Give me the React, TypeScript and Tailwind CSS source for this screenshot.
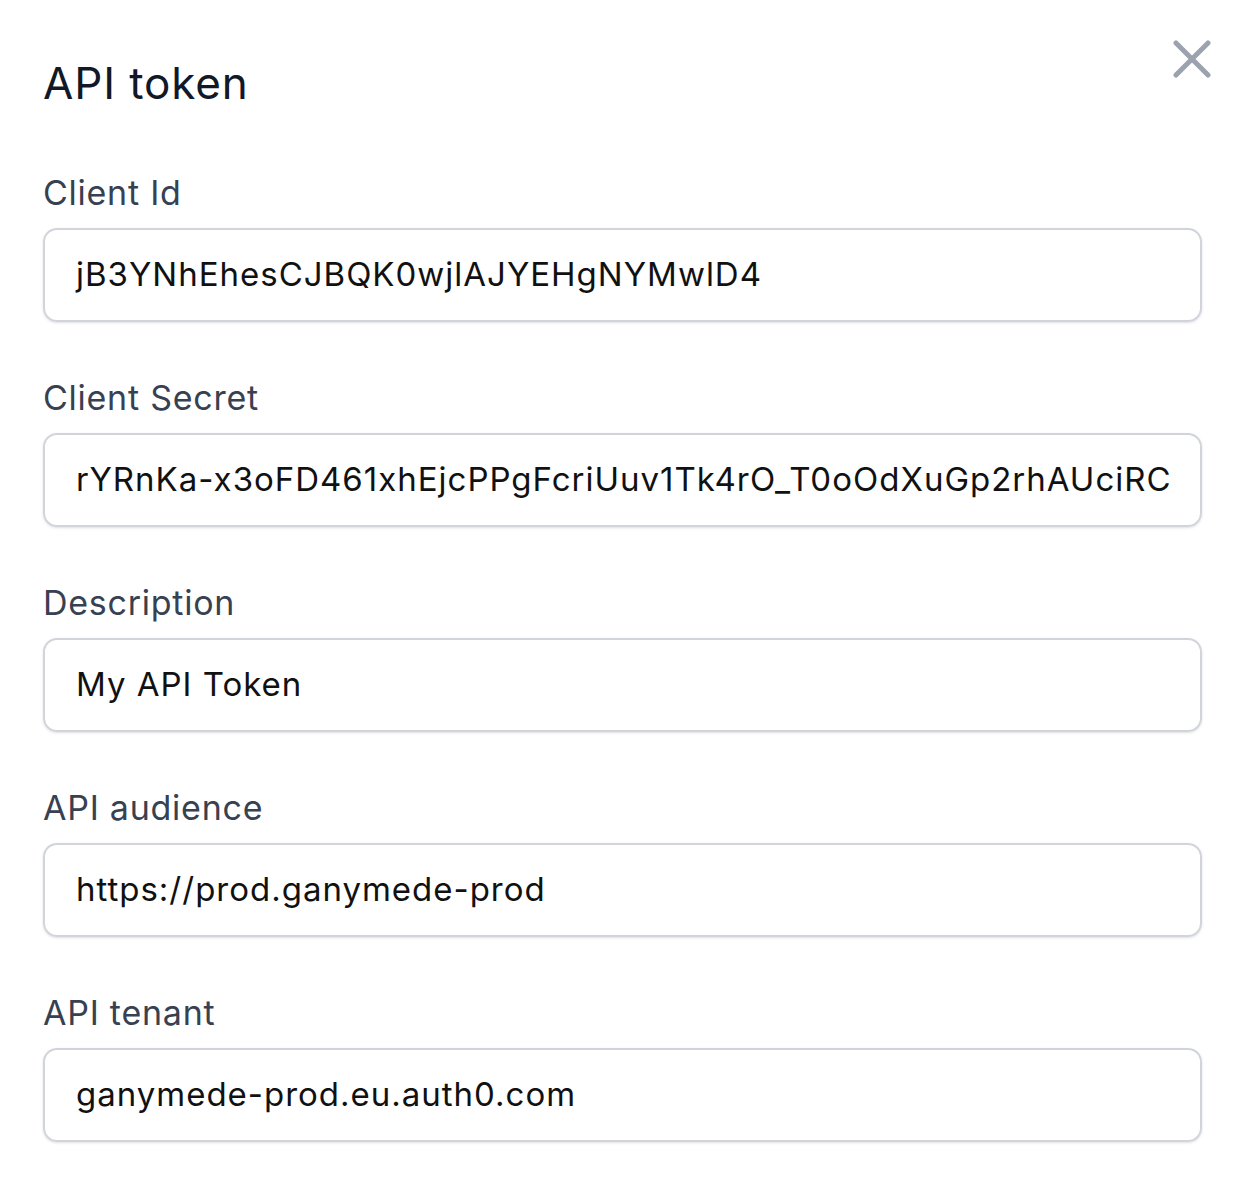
import React from "react";

const fields: { label: string; value: string }[] = [
  { label: "Client Id", value: "jB3YNhEhesCJBQK0wjlAJYEHgNYMwlD4" },
  {
    label: "Client Secret",
    value: "rYRnKa-x3oFD461xhEjcPPgFcriUuv1Tk4rO_T0oOdXuGp2rhAUciRC",
  },
  { label: "Description", value: "My API Token" },
  { label: "API audience", value: "https://prod.ganymede-prod" },
  { label: "API tenant", value: "ganymede-prod.eu.auth0.com" },
];

export default function App() {
  return (
    <div
      className="w-[1246px] h-[1186px] bg-white pl-[43px] pr-[44px] pt-[59px] overflow-hidden"
      style={{ fontFamily: "Inter, 'Noto Sans', sans-serif" }}
    >
      <div className="flex items-start justify-between">
        <h1 className="text-[44px] leading-[48px] font-normal tracking-[0.02em] text-[#111827]">
          API token
        </h1>
        <button className="-mt-[19px] mr-[-9px] text-[#9ca3af]" aria-label="Close">
          <svg width="38" height="38" viewBox="0 0 38 38" fill="none">
            <path
              d="M3 3L35 35M35 3L3 35"
              stroke="currentColor"
              strokeWidth="5"
              strokeLinecap="round"
            />
          </svg>
        </button>
      </div>
      <div className="flex flex-col mt-[66px] gap-[56px]">
        {fields.map((f) => (
          <div key={f.label} className="flex flex-col gap-[15px]">
            <label className="text-[34px] leading-[40px] tracking-[0.022em] text-[#374151]">
              {f.label}
            </label>
            <div className="h-[94px] rounded-[14px] border-2 border-[#d1d5db] shadow-sm flex items-center pl-[31px] pr-[28px] overflow-hidden">
              <span className="text-[33px] tracking-[0.03em] text-[#111111] whitespace-nowrap">
                {f.value}
              </span>
            </div>
          </div>
        ))}
      </div>
    </div>
  );
}
